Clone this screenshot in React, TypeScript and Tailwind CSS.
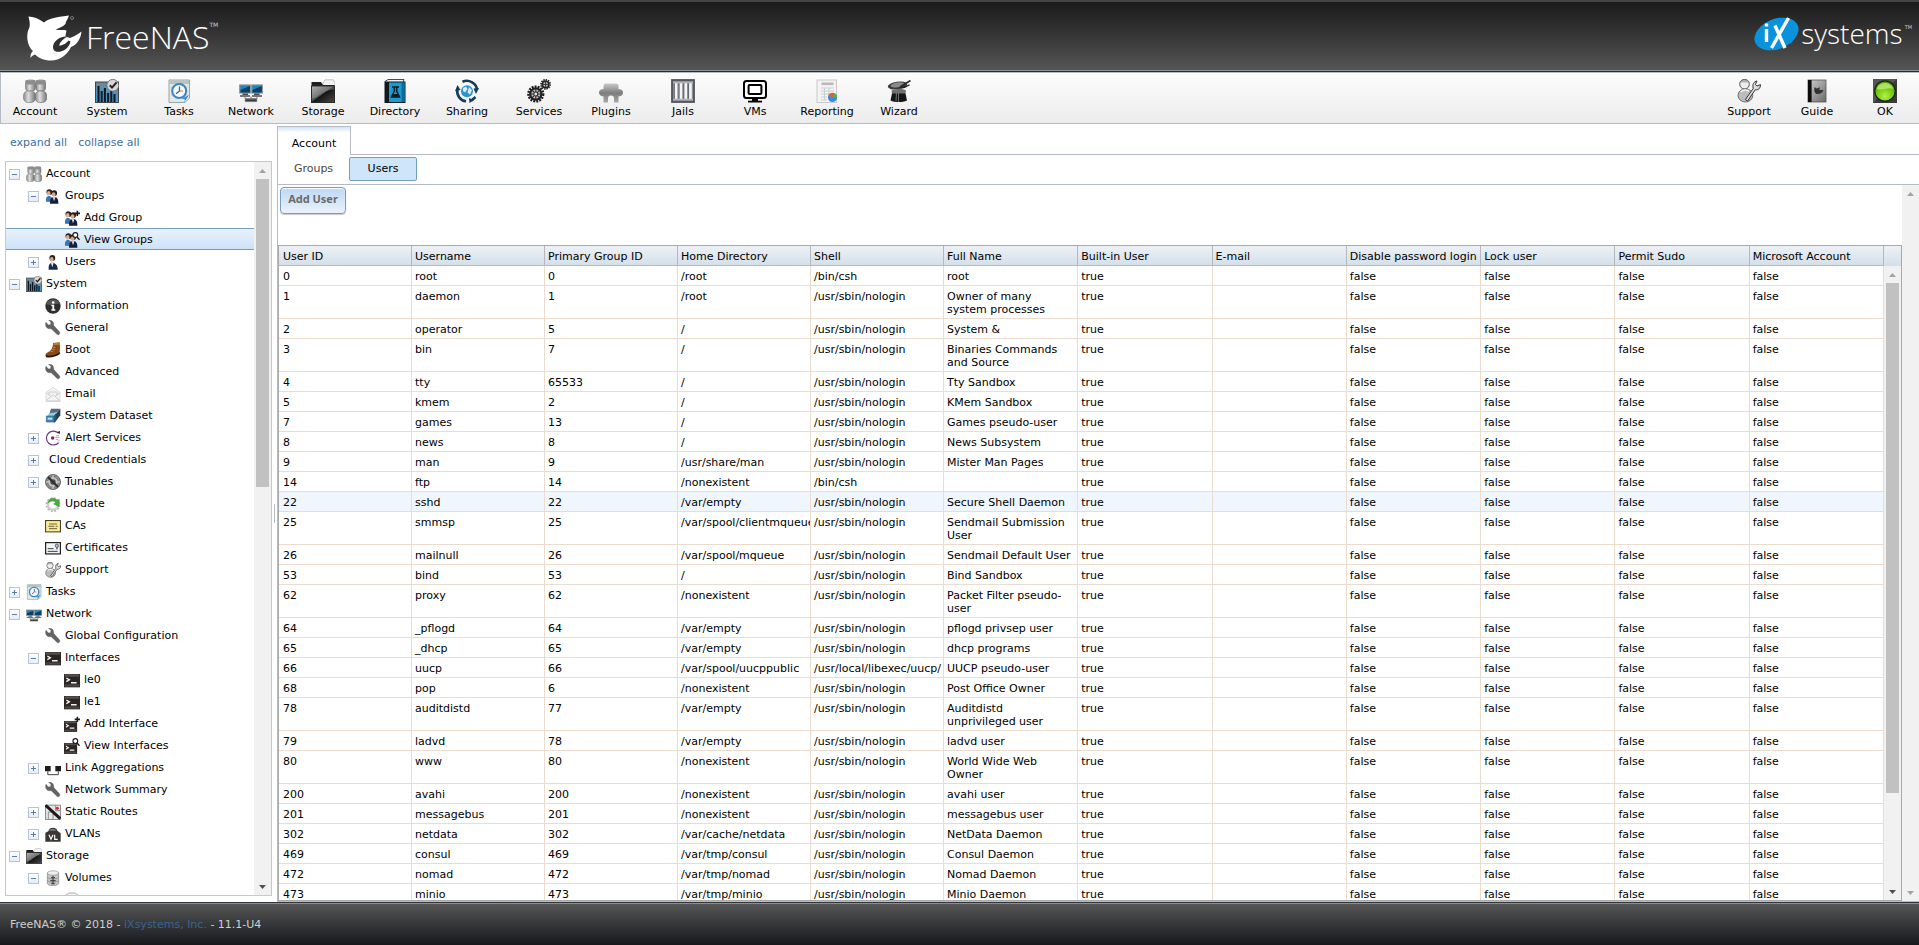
import { useState, type ReactNode } from "react";

const wrench = (
  <path
    d="M1.5 3.5 5 7.5 8.5 7 9 3.5 5.5 0.5C9.5-.5 14 3 12.8 8L21.5 17.5C23.5 20 20.8 23.6 18 21.5L9 12.8C4.5 14.5-1 10 1.5 3.5Z"
    fill="#636363"
    stroke="#4a4a4a"
    strokeWidth="0.6"
  />
);

const terminal = (
  <>
    <rect x="0" y="3" width="24" height="20" fill="#2b2524" />
    <rect x="1" y="3.5" width="22" height="3.5" fill="#57504f" />
    <path d="M1 18.5H23V22H1Z" fill="#4a4443" />
    <path d="M3.5 9 8 11.8 3.5 14.6M10.5 16H19" fill="none" stroke="#f1f1f1" strokeWidth="2.2" />
  </>
);

const person = (
  <>
    <circle cx="11" cy="6" r="4.4" fill="#2a2320" />
    <ellipse cx="10.2" cy="8" rx="2.6" ry="3.6" fill="#d9a98a" />
    <path d="M5.5 23.5C5 16 7 13 11 13S19 16 19 23.5Z" fill="#1c2a4a" />
    <path d="M9 13 10.8 20 13 13Z" fill="#eef2f8" />
  </>
);

const couple = (
  <>
    <circle cx="6.5" cy="6" r="4.3" fill="#2a2320" />
    <ellipse cx="5.6" cy="8" rx="2.6" ry="3.4" fill="#e0b090" />
    <path d="M1.5 20.5C1 14 3 12 6 12S12 15 12 21Z" fill="#3c75b5" />
    <circle cx="13.8" cy="7.6" r="4.4" fill="#241e1c" />
    <ellipse cx="13" cy="9.8" rx="2.7" ry="3.4" fill="#dba98a" />
    <path d="M7.5 23.5C7.5 16.5 9.5 14 14 14S20 16.5 20 23.5Z" fill="#161f3a" />
    <path d="M11.8 14 13.5 20 15.5 14Z" fill="#eef2f8" />
  </>
);

const plusBadge = <path d="M16 5H24M20 1V9" stroke="#1d1d1d" strokeWidth="2.4" />;

const lensBadge = (
  <>
    <circle cx="17" cy="4.6" r="3.6" fill="#fff" stroke="#1d1d1d" strokeWidth="1.7" />
    <path d="M19.5 7.4 23.3 11.6" stroke="#1d1d1d" strokeWidth="2.2" />
  </>
);

const helper = (
  <>
    <circle cx="7.5" cy="5.2" r="4.8" fill="#ededed" stroke="#555" strokeWidth="1" />
    <path d="M3 3.4C5-.5 10.5-.3 12.2 3.4" fill="#b3b3b3" stroke="#666" strokeWidth="0.8" />
    <ellipse cx="8.4" cy="16.4" rx="7.4" ry="6.6" fill="#bcbcbc" stroke="#6d6d6d" />
    <path d="M4 13C6 10.5 10 10.5 12 12.5" stroke="#f4f4f4" strokeWidth="1.6" fill="none" />
    <path
      d="M8.4 20.6 16.3 9.3C15 5.5 17 2.3 20 2L18.4 5.4 20 7 23.5 5.6C23.6 9.3 21 11.4 18.2 10.8L10.6 22Z"
      fill="#dcdcdc"
      stroke="#333"
      strokeWidth="1"
    />
  </>
);

const icons: Record<string, ReactNode> = {
  account: (
    <>
      <defs>
        <linearGradient id="silver" x1="0" y1="0" x2="1" y2="0">
          <stop offset="0" stopColor="#8b8b8b" />
          <stop offset=".4" stopColor="#dedede" />
          <stop offset="1" stopColor="#747474" />
        </linearGradient>
      </defs>
      <rect x="2.5" y="1" width="10" height="11" rx="3" fill="url(#silver)" stroke="#777" strokeWidth="0.6" />
      <rect x="13" y="1" width="9.5" height="11" rx="3" fill="url(#silver)" stroke="#666" strokeWidth="0.6" />
      <path d="M2.5 4V1.2H12.5V4L11 5.4H4Z M13 4V1.2H22.5V4L21 5.4H14.5Z" fill="#8d8d8d" />
      <rect x="0.5" y="12" width="12" height="11.5" rx="4.5" fill="url(#silver)" stroke="#777" strokeWidth="0.6" />
      <rect x="12.2" y="12" width="11.5" height="11.5" rx="4.5" fill="url(#silver)" stroke="#666" strokeWidth="0.6" />
    </>
  ),
  system: (
    <>
      <defs>
        <linearGradient id="chartbg" x1="0" y1="0" x2="0" y2="1">
          <stop offset="0" stopColor="#6f8796" />
          <stop offset="1" stopColor="#3d9ad8" />
        </linearGradient>
      </defs>
      <rect x="0.5" y="3" width="23" height="20.5" fill="url(#chartbg)" stroke="#444" />
      <path
        d="M2.5 7H4.5V23H2.5ZM5.7 12H7.7V23H5.7ZM8.9 9H10.9V23H8.9ZM12.1 14H14.1V23H12.1ZM15.3 12H17.3V23H15.3ZM18.5 15H20.5V23H18.5Z"
        fill="#101722"
      />
      <circle cx="17.8" cy="6.3" r="5.9" fill="#d8d8d8" stroke="#6d6d6d" strokeWidth="0.9" />
      <path d="M14.8 6.2 17 8.6 21.6 3.4" fill="none" stroke="#222" strokeWidth="2" />
    </>
  ),
  tasks: (
    <>
      <path d="M2 1H22.5V19L18 23.5H2Z" fill="#e3e8e6" stroke="#9aa5a5" />
      <path d="M2 1.5H22V5H2Z" fill="#b9c2c2" />
      <path d="M4 8H21M4 12H21M4 16H21" stroke="#bec8c6" />
      <circle cx="12.2" cy="12" r="7" fill="#f5fafd" stroke="#3b86bd" strokeWidth="2" />
      <path d="M12.5 7.5V12L9 14.8" fill="none" stroke="#42658c" strokeWidth="1.3" />
      <path d="M12.5 12H16" stroke="#d07a5a" strokeWidth="1" />
      <path d="M22 16 15 19.5 18 20.5 17 23.5Z" fill="#2f8fd0" />
    </>
  ),
  network: (
    <>
      <rect x="0.8" y="6" width="10.4" height="8" fill="#1d86c4" stroke="#8a8a8a" strokeWidth="1.2" />
      <rect x="12.8" y="6" width="10.4" height="8" fill="#1d86c4" stroke="#8a8a8a" strokeWidth="1.2" />
      <path d="M1.5 11 11 7V13.6H1.5ZM13.5 11 22.8 7V13.6H13.5Z" fill="#0b3f66" />
      <path d="M3.5 15.2H9M15 15.2H20.5M1 17H11M13 17H23" stroke="#4c4c4c" strokeWidth="1.4" />
      <path d="M6 18V19.5H18V18M12 17.5V20" fill="none" stroke="#777" />
      <path d="M6 20H18V22.8H6Z" fill="#3a3a3a" stroke="#aaa" strokeWidth="0.6" />
    </>
  ),
  storage: (
    <>
      <defs>
        <linearGradient id="folder" x1="0" y1="0" x2="1" y2="1">
          <stop offset="0" stopColor="#9a9a9a" />
          <stop offset=".48" stopColor="#4a4a4a" />
          <stop offset=".5" stopColor="#151515" />
          <stop offset="1" stopColor="#4a4a4a" />
        </linearGradient>
      </defs>
      <path d="M12 4 14 .8H22.5L24 4V10H12Z" fill="#f2f2f2" stroke="#b0b0b0" strokeWidth="0.7" />
      <path d="M0.5 3H10L12 6H23.5V10H.5Z" fill="#1e1e1e" />
      <rect x="0.5" y="7" width="23" height="16.5" fill="url(#folder)" stroke="#2a2a2a" />
      <path d="M1 19.5C8 19 11 11 23 10.5V7.5H1Z" fill="#fff" opacity=".22" />
    </>
  ),
  directory: (
    <>
      <path d="M2 2.5 5 .5H21L20 3.5H3Z" fill="#e9eef0" stroke="#222" strokeWidth="0.8" />
      <rect x="2" y="3" width="20" height="20.5" fill="#1c9bd2" stroke="#0c1d28" />
      <rect x="2" y="3" width="4" height="20.5" fill="#101820" />
      <path d="M18.5 3.5H21.5V23H18.5Z" fill="#0d6b9c" />
      <path d="M9 8H16M11.3 8V12L8.5 18H16.5L13.7 12V8" fill="none" stroke="#0c1c26" strokeWidth="1.5" />
      <path d="M10.5 15H14.5L16 17.7H9Z" fill="#0c1c26" />
    </>
  ),
  sharing: (
    <>
      <circle cx="12" cy="12.2" r="6" fill="#2f93cc" />
      <path d="M8 9 11 7.5 12.5 10 10 13.5 8 12ZM14 8 17 11 15 15.5 12.5 13.5Z" fill="#d9eefa" />
      <path d="M7.5 2.8C14-.2 21.8 4.5 22 11" fill="none" stroke="#153b55" strokeWidth="2.6" />
      <path d="M24 9 21 15 18.5 9.5Z" fill="#153b55" />
      <path d="M2.3 10.5C1.5 16 5 21.5 11 22.3M16.5 21.5 20.5 18" fill="none" stroke="#153b55" strokeWidth="2.6" />
      <path d="M0 12 2.5 6 5.5 11ZM14 19 19 21 14.5 24Z" fill="#153b55" />
    </>
  ),
  services: (
    <>
      <circle cx="8.8" cy="15" r="7.3" fill="none" stroke="#1b1b1b" strokeWidth="2.6" strokeDasharray="1.9 1.1" />
      <circle cx="8.8" cy="15" r="5.6" fill="#bdbdbd" stroke="#222" strokeWidth="2.2" />
      <path d="M8.8 9.5V20.5M3.5 15H14.2M5 11.2 12.6 18.8M12.6 11.2 5 18.8" stroke="#333" strokeWidth="1.1" />
      <circle cx="8.8" cy="15" r="2" fill="#e8e8e8" stroke="#222" />
      <circle cx="18.6" cy="5.4" r="4.5" fill="none" stroke="#1b1b1b" strokeWidth="1.8" strokeDasharray="1.4 0.9" />
      <circle cx="18.6" cy="5.4" r="3.2" fill="#c9c9c9" stroke="#222" strokeWidth="1.5" />
      <path d="M18.6 2.5V8.3M15.7 5.4H21.5" stroke="#333" />
    </>
  ),
  plugins: (
    <>
      <defs>
        <linearGradient id="puzzle" x1="0" y1="0" x2="0" y2="1">
          <stop offset="0" stopColor="#c9c9c9" />
          <stop offset=".5" stopColor="#7d7d7d" />
          <stop offset="1" stopColor="#a9a9a9" />
        </linearGradient>
      </defs>
      <path
        d="M4.5 10V6.5Q4.5 4.5 7 4.5H17Q19.5 4.5 19.5 6.5V10Q24 10 24 13.5T19.5 17.5V23.5H15V19.5Q15 16.5 12 16.5T9 19.5V23.5H4.5V17.5Q0 17 0 13.5T4.5 10Z"
        fill="url(#puzzle)"
      />
    </>
  ),
  jails: (
    <>
      <rect x="1" y="1" width="22" height="22" fill="#8d9094" stroke="#50545a" strokeWidth="1.8" />
      <path d="M5 4V20M9.8 4V20M14.6 4V20M19.4 4V20" stroke="#f3f4f5" strokeWidth="2.8" />
      <path d="M3.3 4V20M8 4V20M12.8 4V20M17.6 4V20" stroke="#5c6066" strokeWidth="0.9" />
      <path d="M2 3.5H22M2 20.5H22" stroke="#b2b5b8" strokeWidth="1.4" />
    </>
  ),
  vms: (
    <>
      <rect x="1" y="2" width="22" height="17" rx="2.5" fill="#fff" stroke="#000" strokeWidth="2" />
      <rect x="5.6" y="6" width="12.8" height="9" rx="1" fill="#fff" stroke="#000" strokeWidth="2" />
      <path d="M5 22.6H19" fill="none" stroke="#000" strokeWidth="1.8" />
      <path d="M9 19H15V22H9Z" fill="#000" />
    </>
  ),
  reporting: (
    <>
      <rect x="2" y="1" width="19.5" height="22.5" fill="#f3f3f3" stroke="#cacaca" />
      <rect x="6.5" y="3.5" width="12" height="2.6" fill="#b9b9b9" />
      <path d="M6 9H19M6 12H19M6 15H14M6 18H12M6 21H12M9.5 9V21M14 9V16" stroke="#cbd0cd" />
      <circle cx="17.5" cy="18.5" r="4.6" fill="#3a8be0" />
      <path d="M17.5 18.5 13.2 16.5A4.6 4.6 0 0 1 19 14.1Z" fill="#e4603a" />
      <path d="M17.5 18.5 19 14.1A4.6 4.6 0 0 1 22.1 18.5Z" fill="#56b33c" />
    </>
  ),
  wizard: (
    <>
      <ellipse cx="10.5" cy="6.5" rx="9.8" ry="3.8" transform="rotate(-8 10.5 6.5)" fill="#3b3b3b" />
      <ellipse cx="10.5" cy="5.9" rx="7" ry="2.4" transform="rotate(-8 10.5 6)" fill="#8a8a8a" />
      <path d="M4.5 11.5C10 9.6 15 9.6 19 11.5L18.4 15H5Z" fill="#6f6f6f" />
      <path d="M5 14.5H18.5L20 21.5C15 23.5 8 23.5 3.5 21.5Z" fill="#161616" />
      <path d="M9.5 13.5 9 22.5M11.5 13.5V23" stroke="#777" strokeWidth="0.9" />
      <path d="M13 8 23.5 1.5" stroke="#2a2a2a" strokeWidth="1.6" />
      <path d="M13 8.6C16 9 19.5 8 22.5 5.8" stroke="#222" strokeWidth="1.4" fill="none" />
    </>
  ),
  support: helper,
  guide: (
    <>
      <defs>
        <linearGradient id="cover" x1="0" y1="0" x2="1" y2="1">
          <stop offset="0" stopColor="#cfcfcf" />
          <stop offset="1" stopColor="#6a6a6a" />
        </linearGradient>
      </defs>
      <rect x="3" y="1" width="18" height="22" fill="url(#cover)" stroke="#555" strokeWidth="0.8" />
      <rect x="3" y="1" width="3.6" height="22" fill="#0c0c0c" />
      <path d="M9.5 8 11.5 9.5 15 8.3 14.3 11 18.5 11C17.5 14.6 13 16 10.8 14.4C9 13 9.1 10.5 9.5 8Z" fill="#333" />
    </>
  ),
  ok: (
    <>
      <defs>
        <radialGradient id="lamp" cx=".5" cy=".75" r=".7">
          <stop offset="0" stopColor="#b4f04a" />
          <stop offset=".6" stopColor="#72c80f" />
          <stop offset="1" stopColor="#4b9a05" />
        </radialGradient>
      </defs>
      <rect width="24" height="24" fill="#3a3a3a" />
      <path d="M0 0H24L0 24Z" fill="#555" />
      <circle cx="12" cy="12" r="10.2" fill="url(#lamp)" stroke="#18260a" strokeWidth="1.2" />
      <path d="M4 10C5.5 2 18.5 2 20 10C15 7.5 9 12 4 10Z" fill="#c6ef7e" opacity=".75" />
    </>
  ),
  groups: couple,
  addGroup: (
    <>
      {couple}
      {plusBadge}
    </>
  ),
  viewGroups: (
    <>
      {couple}
      {lensBadge}
    </>
  ),
  user: person,
  info: (
    <>
      <circle cx="12" cy="12" r="11.5" fill="#2e2e2e" />
      <path d="M1.5 9C4 0 20 0 22.5 9C16 7 8 13 1.5 9Z" fill="#6a6a6a" opacity=".7" />
      <circle cx="12.3" cy="6.8" r="2" fill="#fff" />
      <path d="M9.5 10.3H13.8V17H15.5V19H9.5V17H11V12.2H9.5Z" fill="#fff" />
    </>
  ),
  wrench,
  boot: (
    <>
      <path d="M12 1.5 22 .5 22.5 8 22 16C17 21 9 22.5 1.5 21.5C-.5 18.5 2 16.5 7 14C11 11 12 6 12 1.5Z" fill="#8a4a17" />
      <path d="M12.5 2 21.5 1.2 22 4 12.3 5Z" fill="#c77a36" />
      <path d="M1 20C8 21.5 17 19.5 22.3 15V18C17 22.5 8 24 1.5 22.8Z" fill="#2c1608" />
      <path d="M12.5 8H15.5M11 11H14.5M8.5 14H12" stroke="#e0b37c" strokeWidth="1" />
    </>
  ),
  email: (
    <>
      <path d="M1.5 9.5 12 2 22.5 9.5V22H1.5Z" fill="#f3f3f3" stroke="#cfcfcf" />
      <path d="M1.5 9.8 8.5 15.5M22.5 9.8 15.5 15.5M2 21.5 12 13 22 21.5M6 9H18V13.5M6 9V13.5" fill="none" stroke="#bdbdbd" />
      <path d="M1 23H23" stroke="#c7cdd4" strokeWidth="1.4" />
    </>
  ),
  dataset: (
    <>
      <path d="M9 1H23L14 11 6 10Z" fill="#5c6b75" />
      <path d="M23 1V11L14 23V11Z" fill="#2e3b44" />
      <path d="M6 8 17 6.5 20 5 12 14H3Z" fill="#8fcaea" />
      <path d="M2 12H13V21H2Z" fill="#3f86b4" stroke="#2d6387" />
      <path d="M4 14.5H11V17.5H4Z" fill="#bfe2f4" />
      <path d="M13 12 17 8V18L13 22Z" fill="#22587a" />
    </>
  ),
  alert: (
    <>
      <path d="M20 4.8A10.4 10.4 0 1 0 20.5 18.8" fill="none" stroke="#6b3a78" strokeWidth="1.8" />
      <path d="M18 3 22.5 1.5 22 6.5Z" fill="#241a2a" />
      <circle cx="11.5" cy="12" r="2.6" fill="#8d1f63" />
      <path d="M15.5 11H21.5M16 14H20M17 8.5H21M19 16.5H22" stroke="#dd8ca8" strokeWidth="1.5" />
    </>
  ),
  tunables: (
    <>
      <circle cx="12" cy="12" r="11.3" fill="#8b8b8b" stroke="#555" strokeWidth="1.2" />
      <circle cx="12" cy="12" r="8" fill="#c2c2c2" stroke="#666" />
      <circle cx="12" cy="12" r="4" fill="#4c4c4c" />
      <path d="M4.5 4.5 19.5 19.5" stroke="#303030" strokeWidth="3.4" />
      <path d="M12 2V5M12 19V22M2 12H5M19 12H22" stroke="#efefef" strokeWidth="1.5" />
    </>
  ),
  update: (
    <>
      <circle cx="12" cy="13" r="9.6" fill="none" stroke="#b9b9b9" strokeWidth="3" strokeDasharray="3 2" />
      <circle cx="12" cy="13" r="7.5" fill="none" stroke="#cfcfcf" strokeWidth="3.6" />
      <path d="M4 11C5.5 3 14 1 18.5 6.5L21.5 5 21 16 13 12 16 9.5C13 6.5 8 7 4 11Z" fill="#46ae3c" stroke="#2c7f25" strokeWidth="0.6" />
    </>
  ),
  cas: (
    <>
      <rect x="0.8" y="3.8" width="22.4" height="17" fill="#f6ea9b" stroke="#4d4321" strokeWidth="1.6" />
      <path d="M6 9H18M5 12.5H14M16 12.5H19M6 16H18" stroke="#6f6433" strokeWidth="1.5" />
    </>
  ),
  certs: (
    <>
      <rect x="0.9" y="3.9" width="22.2" height="17" fill="#f3f3f3" stroke="#222" strokeWidth="1.8" />
      <circle cx="17.8" cy="8.6" r="2.5" fill="#b6c4d6" stroke="#3c4654" strokeWidth="1.2" />
      <path d="M16.8 11V14.5L18 13.5 19 14.5V11" fill="#52606e" />
      <path d="M4 13H13M4 17H19" stroke="#3f3f3f" strokeWidth="1.5" />
    </>
  ),
  terminal,
  addTerminal: (
    <>
      <g transform="translate(0 5) scale(.82)">{terminal}</g>
      {plusBadge}
    </>
  ),
  viewTerminal: (
    <>
      <g transform="translate(0 5) scale(.82)">{terminal}</g>
      {lensBadge}
    </>
  ),
  link: (
    <>
      <path d="M0 9H8.5V17H0ZM15.5 9H24V17H15.5Z" fill="#1c1c1c" />
      <path d="M4.2 17V22H20V17" fill="none" stroke="#333" strokeWidth="1.4" />
    </>
  ),
  routes: (
    <>
      <rect x="0.6" y="1.6" width="22.8" height="21.8" fill="#e5e5e5" stroke="#5c5c5c" strokeWidth="1" />
      <path d="M5 23V12H12V23M12 16H19M16 2V10H23" fill="none" stroke="#777" strokeWidth="1.2" />
      <path d="M1 2 23 22" stroke="#1a1a1a" strokeWidth="4.6" />
      <circle cx="18.5" cy="6.4" r="2.4" fill="#df2a23" />
    </>
  ),
  vlan: (
    <>
      <path d="M5 8C6 1.5 17 1 18.5 7L23.5 11V23.5H0.5V10Z" fill="#3a3535" />
      <path d="M6 7C8 3 15 3 17 7Z" fill="#807b7b" />
      <path d="M6 13 9 20 12 13M14.5 13V20H19" fill="none" stroke="#f5f5f5" strokeWidth="1.8" />
    </>
  ),
  disks: (
    <>
      <path d="M3.5 4.5V20C3.5 24.5 20.5 24.5 20.5 20V4.5Z" fill="#c6c6c6" stroke="#777" strokeWidth="0.9" />
      <ellipse cx="12" cy="4.5" rx="8.5" ry="3.3" fill="#efefef" stroke="#888" strokeWidth="0.9" />
      <path d="M3.5 11C6 14 18 14 20.5 11M3.5 16C6 19 18 19 20.5 16" fill="none" stroke="#7c7c7c" />
      <path d="M12 8.5V21M9 11.5H15M8 16H16M9.5 20.5H14.5" stroke="#454545" strokeWidth="1.7" />
    </>
  ),
};

function Icon({ name, className }: { name: string; className: string }) {
  return (
    <svg viewBox="0 0 24 24" className={className} aria-hidden="true">
      {icons[name]}
    </svg>
  );
}

const tools: [string, string][] = [
  ["Account", "account"],
  ["System", "system"],
  ["Tasks", "tasks"],
  ["Network", "network"],
  ["Storage", "storage"],
  ["Directory", "directory"],
  ["Sharing", "sharing"],
  ["Services", "services"],
  ["Plugins", "plugins"],
  ["Jails", "jails"],
  ["VMs", "vms"],
  ["Reporting", "reporting"],
  ["Wizard", "wizard"],
];

const sideTools: [string, string][] = [
  ["Support", "support"],
  ["Guide", "guide"],
  ["OK", "ok"],
];

type Node = { label: string; depth: 0 | 1 | 2; icon?: string; state?: "open" | "closed" };

const tree: Node[] = [
  { label: "Account", depth: 0, icon: "account", state: "open" },
  { label: "Groups", depth: 1, icon: "groups", state: "open" },
  { label: "Add Group", depth: 2, icon: "addGroup" },
  { label: "View Groups", depth: 2, icon: "viewGroups" },
  { label: "Users", depth: 1, icon: "user", state: "closed" },
  { label: "System", depth: 0, icon: "system", state: "open" },
  { label: "Information", depth: 1, icon: "info" },
  { label: "General", depth: 1, icon: "wrench" },
  { label: "Boot", depth: 1, icon: "boot" },
  { label: "Advanced", depth: 1, icon: "wrench" },
  { label: "Email", depth: 1, icon: "email" },
  { label: "System Dataset", depth: 1, icon: "dataset" },
  { label: "Alert Services", depth: 1, icon: "alert", state: "closed" },
  { label: "Cloud Credentials", depth: 1, state: "closed" },
  { label: "Tunables", depth: 1, icon: "tunables", state: "closed" },
  { label: "Update", depth: 1, icon: "update" },
  { label: "CAs", depth: 1, icon: "cas" },
  { label: "Certificates", depth: 1, icon: "certs" },
  { label: "Support", depth: 1, icon: "support" },
  { label: "Tasks", depth: 0, icon: "tasks", state: "closed" },
  { label: "Network", depth: 0, icon: "network", state: "open" },
  { label: "Global Configuration", depth: 1, icon: "wrench" },
  { label: "Interfaces", depth: 1, icon: "terminal", state: "open" },
  { label: "le0", depth: 2, icon: "terminal" },
  { label: "le1", depth: 2, icon: "terminal" },
  { label: "Add Interface", depth: 2, icon: "addTerminal" },
  { label: "View Interfaces", depth: 2, icon: "viewTerminal" },
  { label: "Link Aggregations", depth: 1, icon: "link", state: "closed" },
  { label: "Network Summary", depth: 1, icon: "wrench" },
  { label: "Static Routes", depth: 1, icon: "routes", state: "closed" },
  { label: "VLANs", depth: 1, icon: "vlan", state: "closed" },
  { label: "Storage", depth: 0, icon: "storage", state: "open" },
  { label: "Volumes", depth: 1, icon: "disks", state: "open" },
  { label: "/mnt/data", depth: 2, icon: "disks", state: "open" },
];

const indent = { 0: "pl-[3px]", 1: "pl-[22px]", 2: "pl-[41px]" };

const columns = [
  "User ID",
  "Username",
  "Primary Group ID",
  "Home Directory",
  "Shell",
  "Full Name",
  "Built-in User",
  "E-mail",
  "Disable password login",
  "Lock user",
  "Permit Sudo",
  "Microsoft Account",
];

const nologin = "/usr/sbin/nologin";

const users: [string, string, string, string, string, string][] = [
  ["0", "root", "0", "/root", "/bin/csh", "root"],
  ["1", "daemon", "1", "/root", nologin, "Owner of many system processes"],
  ["2", "operator", "5", "/", nologin, "System &"],
  ["3", "bin", "7", "/", nologin, "Binaries Commands and Source"],
  ["4", "tty", "65533", "/", nologin, "Tty Sandbox"],
  ["5", "kmem", "2", "/", nologin, "KMem Sandbox"],
  ["7", "games", "13", "/", nologin, "Games pseudo-user"],
  ["8", "news", "8", "/", nologin, "News Subsystem"],
  ["9", "man", "9", "/usr/share/man", nologin, "Mister Man Pages"],
  ["14", "ftp", "14", "/nonexistent", "/bin/csh", ""],
  ["22", "sshd", "22", "/var/empty", nologin, "Secure Shell Daemon"],
  ["25", "smmsp", "25", "/var/spool/clientmqueue", nologin, "Sendmail Submission User"],
  ["26", "mailnull", "26", "/var/spool/mqueue", nologin, "Sendmail Default User"],
  ["53", "bind", "53", "/", nologin, "Bind Sandbox"],
  ["62", "proxy", "62", "/nonexistent", nologin, "Packet Filter pseudo-user"],
  ["64", "_pflogd", "64", "/var/empty", nologin, "pflogd privsep user"],
  ["65", "_dhcp", "65", "/var/empty", nologin, "dhcp programs"],
  ["66", "uucp", "66", "/var/spool/uucppublic", "/usr/local/libexec/uucp/", "UUCP pseudo-user"],
  ["68", "pop", "6", "/nonexistent", nologin, "Post Office Owner"],
  ["78", "auditdistd", "77", "/var/empty", nologin, "Auditdistd unprivileged user"],
  ["79", "ladvd", "78", "/var/empty", nologin, "ladvd user"],
  ["80", "www", "80", "/nonexistent", nologin, "World Wide Web Owner"],
  ["200", "avahi", "200", "/nonexistent", nologin, "avahi user"],
  ["201", "messagebus", "201", "/nonexistent", nologin, "messagebus user"],
  ["302", "netdata", "302", "/var/cache/netdata", nologin, "NetData Daemon"],
  ["469", "consul", "469", "/var/tmp/consul", nologin, "Consul Daemon"],
  ["472", "nomad", "472", "/var/tmp/nomad", nologin, "Nomad Daemon"],
  ["473", "minio", "473", "/var/tmp/minio", nologin, "Minio Daemon"],
];

function ScrollBar({ thumb, dim = false }: { thumb?: number; dim?: boolean }) {
  return (
    <div className="flex w-[17px] flex-1 shrink-0 flex-col bg-[#f1f1f1]" aria-hidden="true">
      <div className="flex h-[17px] items-center justify-center">
        <svg viewBox="0 0 7 4" className="h-1 w-[7px]">
          <path d="M0 4 3.5 0 7 4Z" fill="#a3a3a3" />
        </svg>
      </div>
      <div className="min-h-0 flex-1 px-[2px]">
        {thumb !== undefined && <div className="bg-[#c1c1c1]" style={{ height: `${thumb}%` }} />}
      </div>
      <div className="flex h-[17px] items-center justify-center">
        <svg viewBox="0 0 7 4" className="h-1 w-[7px]">
          <path d="M0 0 3.5 4 7 0Z" fill={dim ? "#a3a3a3" : "#505050"} />
        </svg>
      </div>
    </div>
  );
}

function ToolButton({ label, icon, width }: { label: string; icon: string; width: string }) {
  return (
    <button type="button" className={`flex flex-col items-center pt-[6px] ${width}`}>
      <Icon name={icon} className="size-6" />
      <span className="pt-px leading-4">{label}</span>
    </button>
  );
}

function Expander({ open }: { open: boolean }) {
  return (
    <span className="flex size-[11px] shrink-0 items-center justify-center border border-[#b5c4dc] bg-linear-to-b from-white to-[#e6edf7]">
      <svg viewBox="0 0 7 7" className="size-[7px]">
        <path d={open ? "M1 3.5H6" : "M1 3.5H6M3.5 1V6"} stroke="#5b7aa8" />
      </svg>
    </span>
  );
}

function Tree() {
  const [selected, setSelected] = useState("View Groups");
  return (
    <div className="mb-[6px] ml-[5px] flex min-h-0 flex-1 border border-[#c8c8c8]">
      <ul role="tree" aria-label="Navigation" className="min-w-0 flex-1 overflow-hidden">
        {tree.map((n, i) => {
          const isSelected = n.label === selected;
          return (
            <li
              key={i}
              role="treeitem"
              aria-level={n.depth + 1}
              aria-selected={isSelected}
              aria-expanded={n.state ? n.state === "open" : undefined}
              onClick={() => setSelected(n.label)}
              className={`flex h-[22px] cursor-pointer items-center border-y pt-[2px] ${indent[n.depth]} ${
                isSelected ? "border-[#759dc0] bg-linear-to-b from-[#e9f2fc] to-[#cde2f8]" : "border-transparent"
              }`}
            >
              {n.state ? <Expander open={n.state === "open"} /> : <span className="w-[11px] shrink-0" />}
              <span className="w-[6px] shrink-0" />
              {n.icon && <Icon name={n.icon} className="size-4 shrink-0" />}
              <span className="pl-1 leading-4 whitespace-nowrap">{n.label}</span>
            </li>
          );
        })}
      </ul>
      <div className="flex flex-col">
        <ScrollBar thumb={44} />
      </div>
    </div>
  );
}

function UsersTable() {
  return (
    <div className="mt-[31px] flex min-h-0 flex-1 overflow-hidden border border-[#a9a9a9]">
      <div className="min-w-0 flex-1 overflow-hidden">
        <table className="w-full table-fixed border-separate border-spacing-0">
          <colgroup>
            {columns.map((c, i) => (
              <col key={c} className={i < 5 ? "w-[133px]" : ""} />
            ))}
          </colgroup>
          <thead>
            <tr className="bg-linear-to-b from-[#edf1f6] to-[#d3dfe9]">
              {columns.map((c) => (
                <th
                  key={c}
                  scope="col"
                  className="h-5 overflow-hidden border-r border-b border-[#b4b9bf] px-[3px] pt-[2px] text-left leading-[13px] font-normal whitespace-nowrap first:pl-1"
                >
                  {c}
                </th>
              ))}
            </tr>
          </thead>
          <tbody>
            {users.map((u) => (
              <tr key={u[0]} className={u[1] === "sshd" ? "bg-[#eff6fe]" : "bg-white hover:bg-[#eff6fe]"}>
                {[...u, "true", "", "false", "false", "false", "false"].map((v, i) => (
                  <td
                    key={i}
                    className={`overflow-hidden border-r border-b border-[#ecdccf] px-[3px] pt-1 pb-[2px] align-top leading-[13px] first:pl-1 ${
                      i === 5 ? "" : "whitespace-nowrap"
                    }`}
                  >
                    {v}
                  </td>
                ))}
              </tr>
            ))}
          </tbody>
        </table>
      </div>
      <div className="flex flex-col">
        <div className="h-5 bg-linear-to-b from-[#edf1f6] to-[#d3dfe9]" />
        <ScrollBar thumb={85} />
      </div>
    </div>
  );
}

function FreeNasLogo() {
  return (
    <a href="#home" aria-label="FreeNAS home" className="flex items-start text-white">
      <svg viewBox="0 0 56 48" className="h-12 w-14" aria-hidden="true">
        <path
          d="M1.5 2.5C6 2.6 12 4.5 17 8.5C23 3.5 32 3 42 1.5C41 5 38.5 7.5 38.5 10C35.5 13 32 14 28.5 15.5C32 16.5 37 15.5 39.5 16.5C39 19 38.5 21 38.5 22.5L43 24C47 22.5 51 20.5 54.5 17.5C54 24 50 31 44 33C40 41 33 46.5 24 46.5C16.5 46.5 12 44 8 40.5C6.5 41 4.5 42 3.5 44C3.2 40.5 4.5 38 6 37C1 32.5-1 24 1 16.5C4 12 2.5 7 1.5 2.5Z"
          fill="#fff"
        />
        <path
          d="M40.5 22.6C34 22 27 26 26 32.5C25.8 35 27 37.3 29.5 37.8C36 38.5 42 34 43.5 27.5L41.5 26.5C39.5 29 36.5 31.5 32 31.5C33.5 27.5 36.5 24.5 40.5 22.6Z"
          fill="#2f2f2f"
        />
        <circle cx="45" cy="4" r="1.5" fill="none" stroke="#999" strokeWidth="0.7" />
      </svg>
      <span className="pl-[3px] font-['Open_Sans',sans-serif] text-[32px] leading-[46px] font-light">FreeNAS</span>
      <span className="pt-[6px] text-[6px] text-[#cfcfcf]">TM</span>
    </a>
  );
}

function IxLogo() {
  return (
    <a href="#ixsystems" aria-label="iXsystems" className="flex items-start gap-[2px] text-white">
      <svg viewBox="0 0 45 36" className="h-9 w-[45px]" aria-hidden="true">
        <ellipse cx="22.5" cy="18" rx="23" ry="15" transform="rotate(-22 22.5 18)" fill="#0a93dc" />
        <path d="M12.5 13V26M21 9.5 31 32M34.5 2 17.5 32" fill="none" stroke="#fff" strokeWidth="3.4" />
        <path d="M12.5 7.5V10.5" stroke="#fff" strokeWidth="3.4" />
      </svg>
      <span className="font-['Open_Sans',sans-serif] text-[28px] leading-[34px] font-light">systems</span>
      <span className="pt-2 text-[5px] text-[#cfcfcf]">TM</span>
    </a>
  );
}

export default function App() {
  return (
    <div className="flex h-screen flex-col overflow-hidden bg-white font-['DejaVu_Sans',Verdana,sans-serif] text-[11px] text-black">
      <header className="flex h-[72px] shrink-0 items-start justify-between border-t-2 border-b border-t-[#444] border-b-[#2b2b33] bg-linear-to-b from-[#1b1b1b] to-[#565656] pr-[7px] pl-[27px] shadow-[inset_0_-1px_0_#8f8f8b]">
        <div className="pt-[12px]">
          <FreeNasLogo />
        </div>
        <div className="pt-[14px]">
          <IxLogo />
        </div>
      </header>

      <nav
        aria-label="Main"
        className="flex h-[52px] shrink-0 items-start justify-between border border-r-0 border-[#b5bcc7] bg-linear-to-b from-[#fcfcfc] to-[#ececec]"
      >
        <div className="-ml-[2px] flex">
          {tools.map(([label, icon]) => (
            <ToolButton key={label} label={label} icon={icon} width="w-[72px]" />
          ))}
        </div>
        <div className="flex">
          {sideTools.map(([label, icon]) => (
            <ToolButton key={label} label={label} icon={icon} width="w-[68px]" />
          ))}
        </div>
      </nav>

      <div className="flex min-h-0 flex-1">
        <aside className="flex w-[272px] shrink-0 flex-col">
          <div className="flex h-[37px] items-center gap-[11px] pt-px pl-[10px] text-[#3b6ea5]">
            <a href="#expand">expand all</a>
            <a href="#collapse">collapse all</a>
          </div>
          <Tree />
        </aside>
        <div className="flex w-[5px] shrink-0 items-center justify-center">
          <div className="h-[19px] w-px bg-[#b5bcc7]" />
        </div>

        <main className="mt-[2px] flex min-w-0 flex-1 flex-col border-b border-l border-[#b5bcc7]">
          <div role="tablist" aria-label="Open pages" className="flex h-[29px] shrink-0 border-b border-[#b5bcc7]">
            <button
              type="button"
              role="tab"
              aria-selected="true"
              className="h-[29px] w-[73px] border-t border-r border-[#b5bcc7] bg-white bg-linear-to-b from-[#cfe3f8] to-white to-20% pt-[6px]"
            >
              Account
            </button>
          </div>
          <div
            role="tablist"
            aria-label="Account pages"
            className="flex h-[30px] shrink-0 items-start border-b border-[#b5bcc7] pt-[2px]"
          >
            <button type="button" role="tab" aria-selected="false" className="h-6 w-[71px] text-[#494949]">
              Groups
            </button>
            <button
              type="button"
              role="tab"
              aria-selected="true"
              className="h-6 w-[68px] rounded-[2px] border border-[#759dc0] bg-[#cfe5fa]"
            >
              Users
            </button>
          </div>
          <div className="flex min-h-0 flex-1">
            <div className="flex min-w-0 flex-1 flex-col pt-[2px]">
              <button
                type="button"
                className="ml-[2px] h-[27px] w-[66px] shrink-0 rounded-[4px] border border-[#769dc0] bg-linear-to-b from-[#bcd8f4] to-[#eaf3fc] pb-[2px] font-['Noto_Sans',sans-serif] text-[11px] font-bold text-[#6a6a6a] shadow-[inset_0_1px_1px_#fff,0_1px_1px_#c9c9c9]"
              >
                Add User
              </button>
              <UsersTable />
            </div>
            <div className="flex flex-col">
              <ScrollBar dim />
            </div>
          </div>
        </main>
      </div>

      <footer className="flex h-[43px] shrink-0 items-center border-t border-[#33353d] bg-linear-to-b from-[#585858] to-[#17191d] pt-[3px] pl-[10px] text-[#cfcfcf] shadow-[inset_0_1px_0_#8d8d8d]">
        <p>
          FreeNAS® © 2018 -{" "}
          <a href="#ixsystems" className="text-[#39658f]">
            iXsystems, Inc.
          </a>{" "}
          - 11.1-U4
        </p>
      </footer>
    </div>
  );
}
